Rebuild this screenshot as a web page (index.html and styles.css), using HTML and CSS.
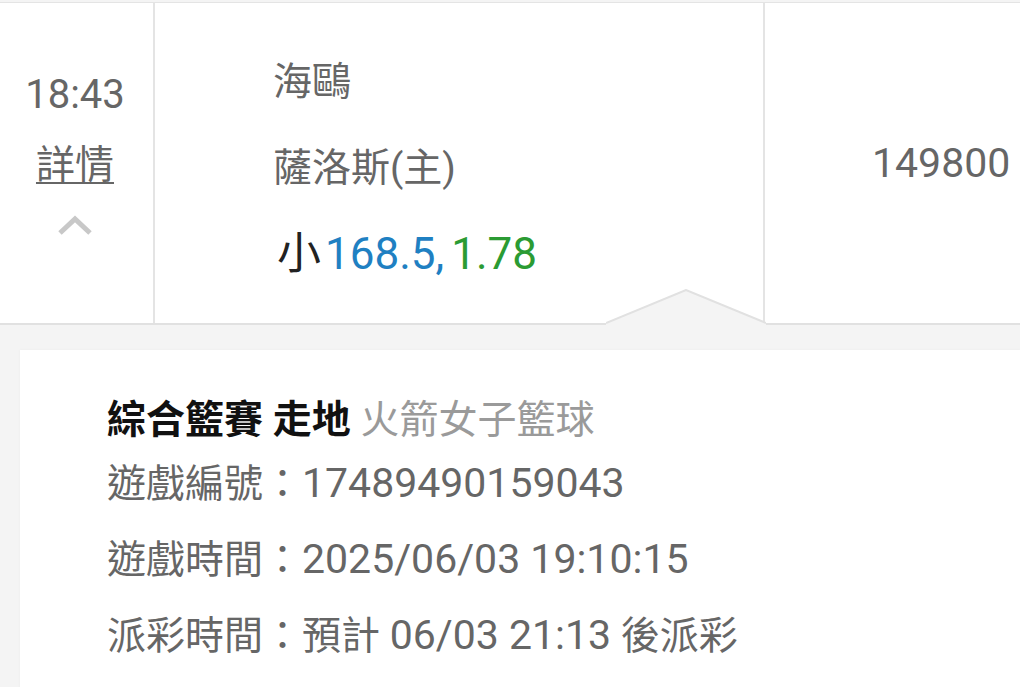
FILE: index.html
```html
<!DOCTYPE html>
<html lang="zh-Hant">
<head>
  <meta charset="UTF-8">
  <meta name="viewport" content="width=device-width, initial-scale=1.0">
  <title>注單詳情</title>
  <link rel="stylesheet" href="styles.css">
</head>
<body>
  <div class="bet-row">
    <div class="col col-time">
      <div class="time">18:43</div>
      <a class="detail-link" href="#">詳情</a>
      <svg class="chevron" width="36" height="22" viewBox="0 0 36 22">
        <polyline points="3,19 18,5 33,19" fill="none" stroke="#c8c8c8" stroke-width="5"/>
      </svg>
    </div>
    <div class="col col-match">
      <div class="line">海鷗</div>
      <div class="line">薩洛斯(主)</div>
      <div class="line pick"><span class="side">小</span><span class="hdp">168.5,</span><span class="odds">1.78</span></div>
    </div>
    <div class="col col-amount"><span class="num">149800</span></div>
  </div>

  <div class="detail">
    <svg class="detail-arrow" width="160" height="40" viewBox="0 0 160 40">
      <polygon points="0,34 80,1 160,34 160,40 0,40" fill="#f4f4f4"/>
      <polyline points="0,34 80,1 160,34" fill="none" stroke="#e1e1e1" stroke-width="2"/>
    </svg>
    <div class="detail-card">
      <div class="detail-title"><b>綜合籃賽 走地</b> <span class="league">火箭女子籃球</span></div>
      <div class="detail-line">遊戲編號：<span class="num">17489490159043</span></div>
      <div class="detail-line">遊戲時間：<span class="num">2025/06/03 19:10:15</span></div>
      <div class="detail-line">派彩時間：預計 <span class="num">06/03 21:13</span> 後派彩</div>
    </div>
  </div>
</body>
</html>
```

FILE: styles.css
```css
body {
  margin: 0;
  padding-top: 2px;
  font-family: Roboto, "Noto Sans CJK TC", sans-serif;
  font-size: 39px;
  color: #666;
  background-color: #f4f4f4;
  overflow: hidden;
}

.num {
  font-size: 41px;
}

.bet-row {
  display: flex;
  height: 320px;
  background-color: #fff;
  border-top: 1px solid #e4e4e4;
  border-bottom: 2px solid #e1e1e1;
}

.col {
  box-sizing: border-box;
}

.col-time {
  width: 155px;
  flex-shrink: 0;
  display: flex;
  flex-direction: column;
  align-items: center;
  padding: 57px 3px 0 0;
  border-right: 2px solid #e4e4e4;
}

.time {
  font-size: 40px;
  line-height: 70px;
}

.detail-link {
  line-height: 70px;
  color: #666;
  text-decoration: underline;
  text-decoration-thickness: 2px;
  text-underline-offset: 4px;
}

.chevron {
  margin-top: 14px;
}

.col-match {
  width: 610px;
  flex-shrink: 0;
  padding: 36px 0 0 118px;
  border-right: 2px solid #e4e4e4;
}

.line {
  line-height: 86px;
}

.pick {
  font-size: 44px;
  color: #222;
  padding-left: 4px;
}

.side {
  margin-right: 4px;
}

.hdp {
  color: #1f80c2;
}

.odds {
  color: #2b9b33;
  margin-left: 7px;
}

.col-amount {
  flex: 1;
  display: flex;
  align-items: center;
  padding-left: 107px;
}

.detail {
  position: relative;
  padding: 25px 0 0 20px;
}

.detail-arrow {
  position: absolute;
  left: 606px;
  top: -36px;
}

.detail-card {
  background-color: #fff;
  height: 340px;
  padding: 44px 0 0 87px;
  box-shadow: 0 0 3px rgba(0, 0, 0, 0.04);
}

.detail-title {
  line-height: 52px;
  color: #111;
}

.detail-title b {
  font-weight: 700;
}

.league {
  color: #9a9a9a;
}

.detail-line {
  line-height: 75px;
}
```
